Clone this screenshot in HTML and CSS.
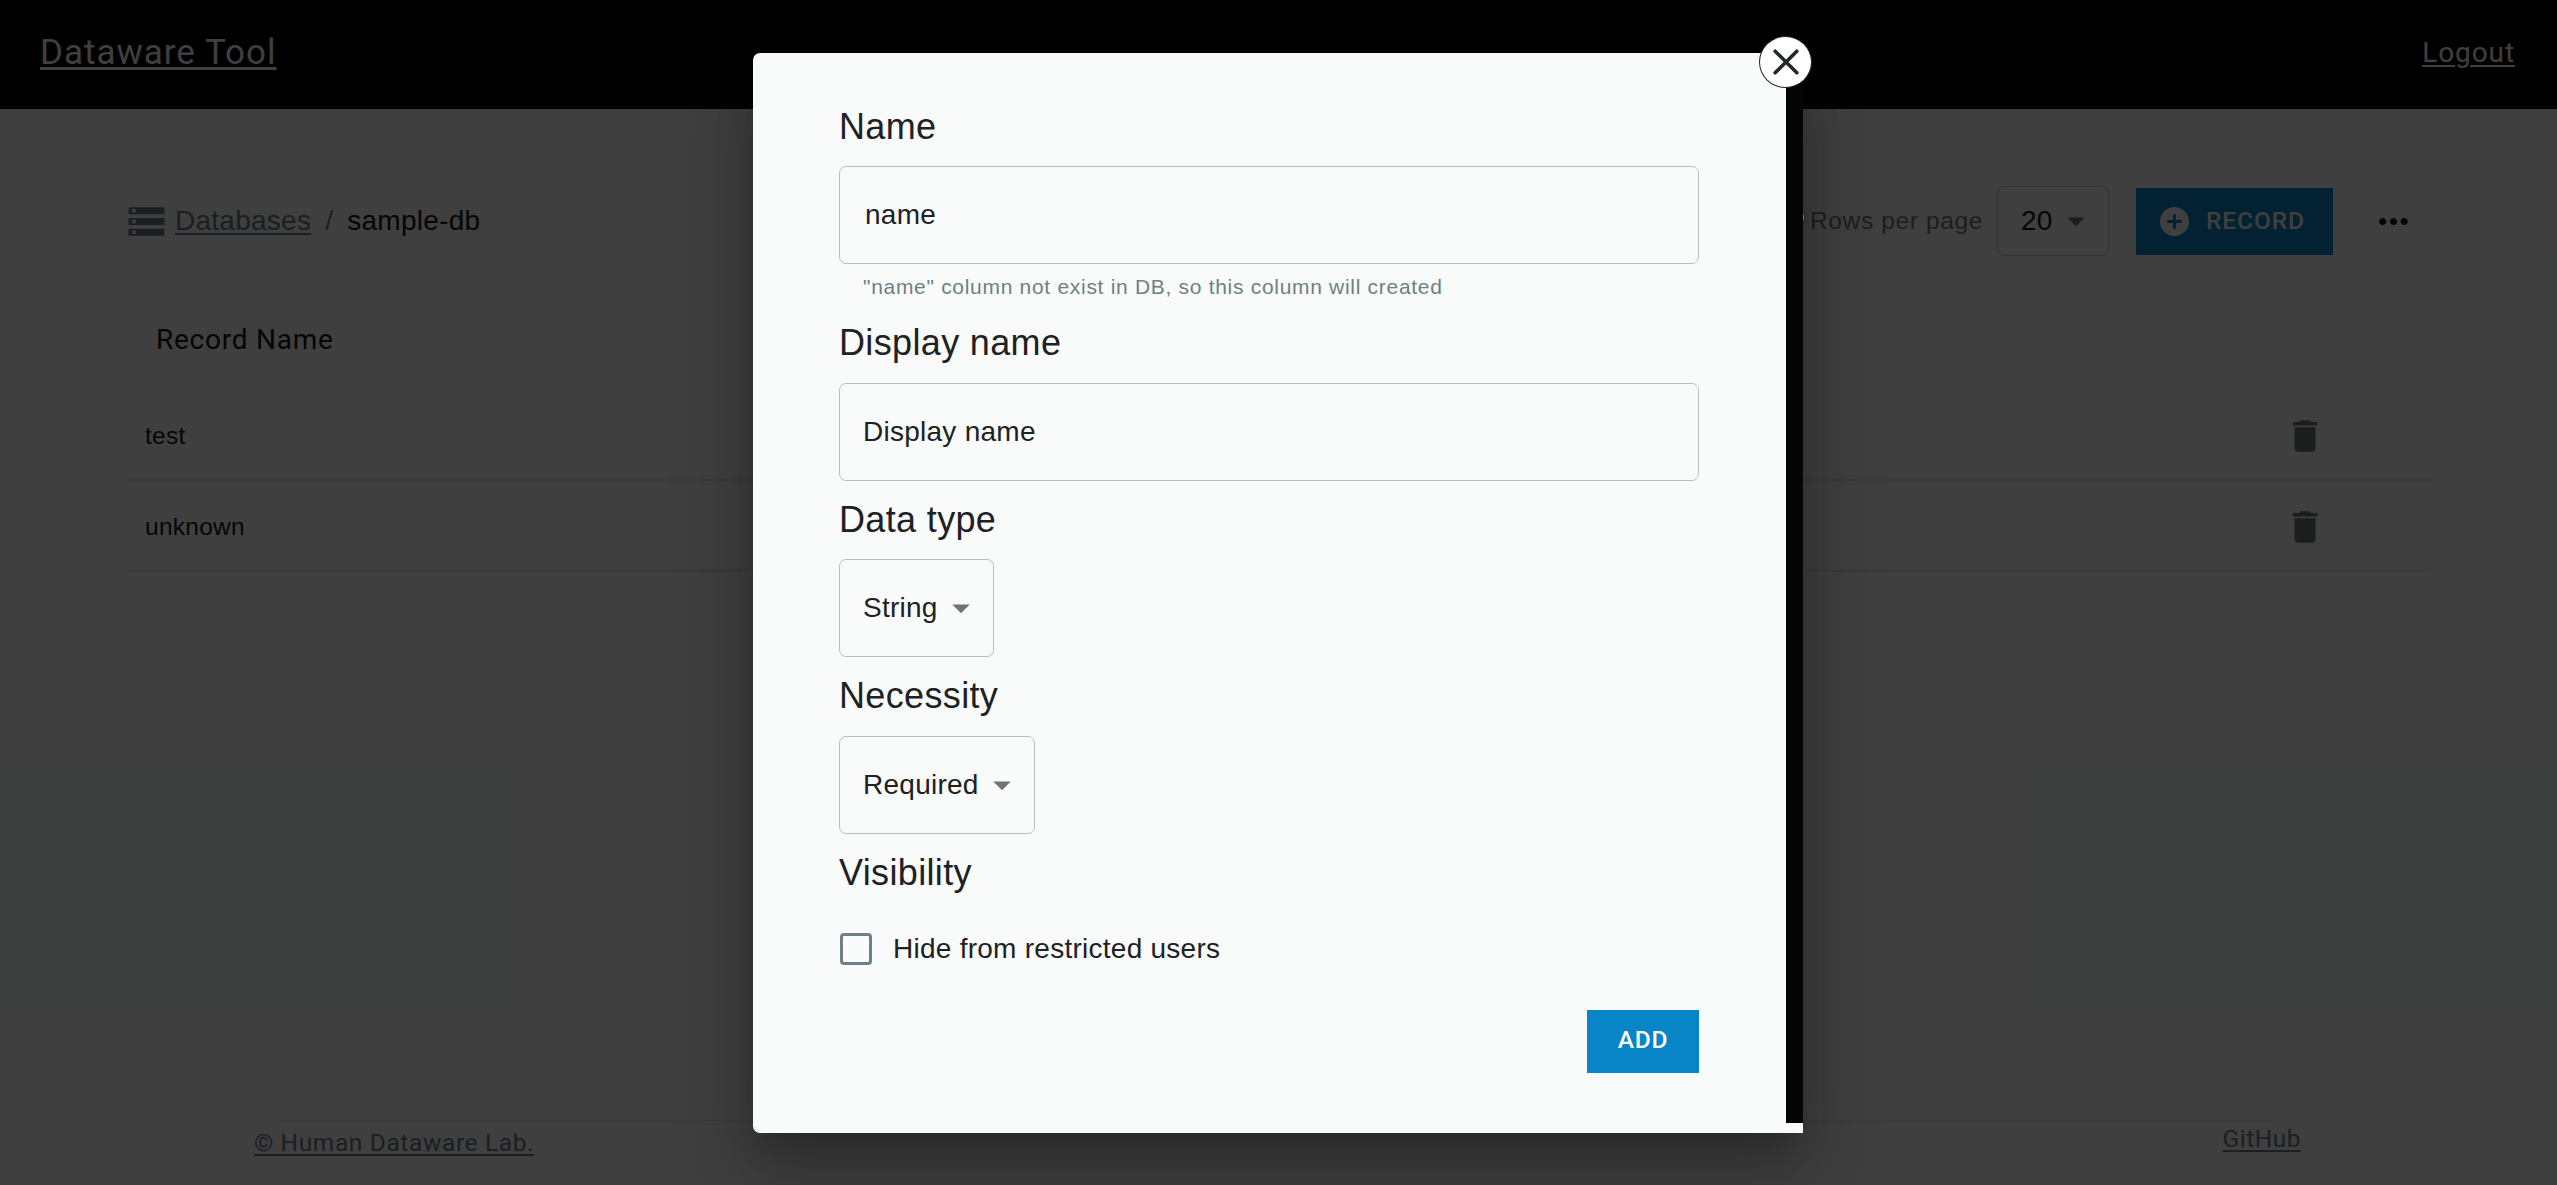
FILE: index.html
```html
<!DOCTYPE html>
<html lang="en">
<head>
<meta charset="utf-8">
<title>Dataware Tool</title>
<link rel="stylesheet" href="styles.css">
</head>
<body>
<div class="app">
  <header class="header">
    <a class="brand">Dataware Tool</a>
    <a class="logout">Logout</a>
  </header>
  <main class="main">
    <div class="toolbar">
      <nav class="crumbs">
        <svg class="storage" viewBox="0 0 24 24"><path d="M2 20h20v-4H2v4zm2-3h2v2H4v-2zM2 4v4h20V4H2zm4 3H4V5h2v2zm-4 7h20v-4H2v4zm2-3h2v2H4v-2z"/></svg>
        <a class="crumb-link">Databases</a><span class="slash">/</span><span class="current">sample-db</span>
      </nav>
      <div class="actions">
        <span class="rows-label">Rows per page</span>
        <div class="rows-select"><span>20</span><svg class="arrow" viewBox="0 0 24 24"><path d="M7 10l5 5 5-5z"/></svg></div>
        <div class="record"><svg class="plus" viewBox="0 0 24 24"><path d="M12 2C6.48 2 2 6.48 2 12s4.48 10 10 10 10-4.48 10-10S17.52 2 12 2zm5 11h-4v4h-2v-4H7v-2h4V7h2v4h4v2z"/></svg><span>RECORD</span></div>
        <svg class="more" viewBox="0 0 24 24"><path d="M6 10c-1.100 0-2 .9-2 2s.9 2 2 2 2-.9 2-2-.9-2-2-2zm12 0c-1.100 0-2 .9-2 2s.9 2 2 2 2-.9 2-2-.9-2-2-2zm-6 0c-1.100 0-2 .9-2 2s.9 2 2 2 2-.9 2-2-.9-2-2-2z"/></svg>
      </div>
    </div>
    <div class="table">
      <div class="thead">Record Name</div>
      <div class="row"><span>test</span><svg class="trash" viewBox="0 0 24 24"><path d="M6 19c0 1.100.9 2 2 2h8c1.100 0 2-.9 2-2V7H6v12zM19 4h-3.500l-1-1h-5l-1 1H5v2h14V4z"/></svg></div>
      <div class="row"><span>unknown</span><svg class="trash" viewBox="0 0 24 24"><path d="M6 19c0 1.100.9 2 2 2h8c1.100 0 2-.9 2-2V7H6v12zM19 4h-3.500l-1-1h-5l-1 1H5v2h14V4z"/></svg></div>
    </div>
  </main>
  <footer class="footer">
    <hr class="rule">
    <div class="foot-links"><a class="copyright">© Human Dataware Lab.</a><a class="github">GitHub</a></div>
  </footer>
</div>
<div class="backdrop">
  <div class="dialog">
    <div class="pane">
      <section class="field">
        <h2>Name</h2>
        <div class="input input-filled">name</div>
        <p class="helper">"name" column not exist in DB, so this column will created</p>
      </section>
      <section class="field">
        <h2>Display name</h2>
        <div class="input">Display name</div>
      </section>
      <section class="field">
        <h2>Data type</h2>
        <div class="select"><span>String</span><svg class="arrow" viewBox="0 0 24 24"><path d="M7 10l5 5 5-5z"/></svg></div>
      </section>
      <section class="field">
        <h2>Necessity</h2>
        <div class="select"><span>Required</span><svg class="arrow" viewBox="0 0 24 24"><path d="M7 10l5 5 5-5z"/></svg></div>
      </section>
      <section class="field">
        <h2>Visibility</h2>
        <label class="check"><span class="box"></span><span class="check-label">Hide from restricted users</span></label>
      </section>
      <div class="submit"><span class="add">ADD</span></div>
    </div>
    <div class="knob"></div>
    <div class="scrollbar"></div>
    <div class="close"><svg viewBox="0 0 24 24"><path d="M2 2L22 22M22 2L2 22"/></svg></div>
  </div>
</div>
</body>
</html>
```
FILE: styles.css
```css
* { box-sizing: border-box; }
body {
  margin: 0;
  height: 1185px;
  overflow: hidden;
  background: #f9fafa;
  color: #202123;
  font: 28px/42px "Liberation Sans", Arial, sans-serif;
  letter-spacing: 0.26px;
}
svg { display: block; flex: none; fill: currentColor; }

.app { display: flex; flex-direction: column; height: 1185px; }
.header {
  display: flex;
  justify-content: space-between;
  align-items: center;
  height: 109px;
  padding: 0 42px 4px 40px;
  background: #000;
  color: #fafafa;
  font-family: Roboto, sans-serif;
}
.brand {
  font-size: 35px;
  letter-spacing: 1px;
  text-decoration: underline;
  text-decoration-thickness: 3px;
  text-underline-offset: 3px;
}
.logout { text-decoration: underline; text-decoration-thickness: 2px; text-underline-offset: 3px; letter-spacing: 0.9px; }

.main { flex: 1; padding: 77px 128px 0; }
.toolbar { display: flex; justify-content: space-between; align-items: center; height: 70px; }
.crumbs { display: flex; align-items: center; color: #6a7c84; }
.storage { width: 43px; height: 43px; margin: 0 7px 0 -3px; }
.crumb-link { text-decoration: underline; text-decoration-thickness: 2px; text-underline-offset: 3px; }
.slash { margin: 0 14px; }
.current { color: #151617; }
.actions { display: flex; align-items: center; }
.rows-label { color: #6a7c84; font-size: 24.5px; letter-spacing: 0.63px; }
.rows-select {
  display: flex;
  justify-content: space-between;
  align-items: center;
  width: 112px;
  height: 70px;
  margin-left: 14px;
  padding: 0 11px 0 23px;
  border: 1px solid #bfc0c0;
  border-radius: 7px;
  color: #151617;
}
.arrow { width: 42px; height: 42px; color: #727373; }
.record {
  display: flex;
  align-items: center;
  width: 197px;
  height: 67px;
  margin-left: 27px;
  padding-left: 21px;
  gap: 14px;
  background: #0885c6;
  color: #fafafa;
  font: 500 24.5px/42px Roboto, sans-serif;
  letter-spacing: 0.9px;
}
.plus { width: 35px; height: 35px; }
.more { width: 43px; height: 43px; margin: 0 14px 0 39px; color: #151617; }

.table { padding-top: 49px; color: #151617; }
.thead { height: 85px; padding: 14px 0 0 28px; font-family: Roboto, sans-serif; letter-spacing: 0.75px; line-height: 42px; }
.row {
  display: flex;
  justify-content: space-between;
  align-items: center;
  height: 91px;
  padding: 3px 103px 0 17px;
  border-bottom: 2px solid #e4e5e5;
  font-size: 24.5px;
}
.trash { width: 42px; height: 42px; color: #727373; }

.footer { height: 65px; font-family: Roboto, sans-serif; font-size: 24.5px; color: #6a7c84; }
.rule { height: 1px; margin: 0 284px 0 282px; border: 0; background: #e0e1e1; }
.foot-links { display: flex; justify-content: space-between; align-items: flex-start; padding: 0 256px 0 254px; }
.foot-links a { text-decoration: underline; text-decoration-thickness: 2px; text-underline-offset: 3px; }
.copyright { margin-top: 1px; letter-spacing: 0.62px; }
.github { margin-top: -3px; letter-spacing: 0.5px; }

.backdrop {
  position: absolute;
  inset: 0;
  display: flex;
  align-items: flex-start;
  justify-content: center;
  padding: 53px 1px 0 0;
  background: rgba(0, 0, 0, 0.75);
}
.dialog {
  position: relative;
  display: flex;
  align-items: flex-start;
  width: 1050px;
  height: 1080px;
  border-radius: 7px 7px 0 7px;
  background: #f9fbfa;
  box-shadow: 0 19px 26px -12px rgba(0,0,0,.2), 0 42px 66px 5px rgba(0,0,0,.14), 0 16px 80px 14px rgba(0,0,0,.12);
}
.pane { flex: 1; padding: 46px 87px 0 86px; }
.knob {
  position: absolute;
  top: 153px;
  right: -2px;
  width: 17px;
  height: 22px;
  border: 1px solid #1c1c1c;
  border-radius: 50%;
  background: #8a8a8a;
}
.scrollbar { position: relative; width: 17px; height: 1070px; background: #050505; }
.field { margin-bottom: 11.2px; }
.field h2 { margin: 0 0 11.3px; font-size: 36px; font-weight: 400; line-height: 56px; letter-spacing: 0.35px; }
.input, .select {
  display: flex;
  align-items: center;
  height: 98px;
  padding: 0 23px;
  border: 1px solid #bcbebe;
  border-radius: 7px;
}
.input-filled { padding-left: 25px; }
.select { width: fit-content; padding-right: 11px; gap: 2px; }
.helper { margin: 5px 0 0; padding-left: 24px; color: #6f7f85; font-size: 21px; line-height: 35px; letter-spacing: 0.7px; }
.check { display: flex; align-items: center; height: 74px; }
.box { width: 32px; height: 32px; margin: 0 21px 0 1px; border: 3.5px solid #6f7f87; border-radius: 4px; }
.submit { display: flex; justify-content: flex-end; margin-top: 24px; }
.add {
  width: 112px;
  height: 63px;
  background: #0885c6;
  color: #fafafa;
  font: 500 24.5px/60px Roboto, sans-serif;
  letter-spacing: 0.7px;
  text-align: center;
}
.close {
  position: absolute;
  top: -17px;
  right: -9px;
  display: flex;
  align-items: center;
  justify-content: center;
  width: 53px;
  height: 52px;
  border: 1px solid #222628;
  border-radius: 50%;
  background: #fff;
}
.close svg { width: 26px; height: 26px; fill: none; stroke: #22282b; stroke-width: 3.3; stroke-linecap: round; }
```
